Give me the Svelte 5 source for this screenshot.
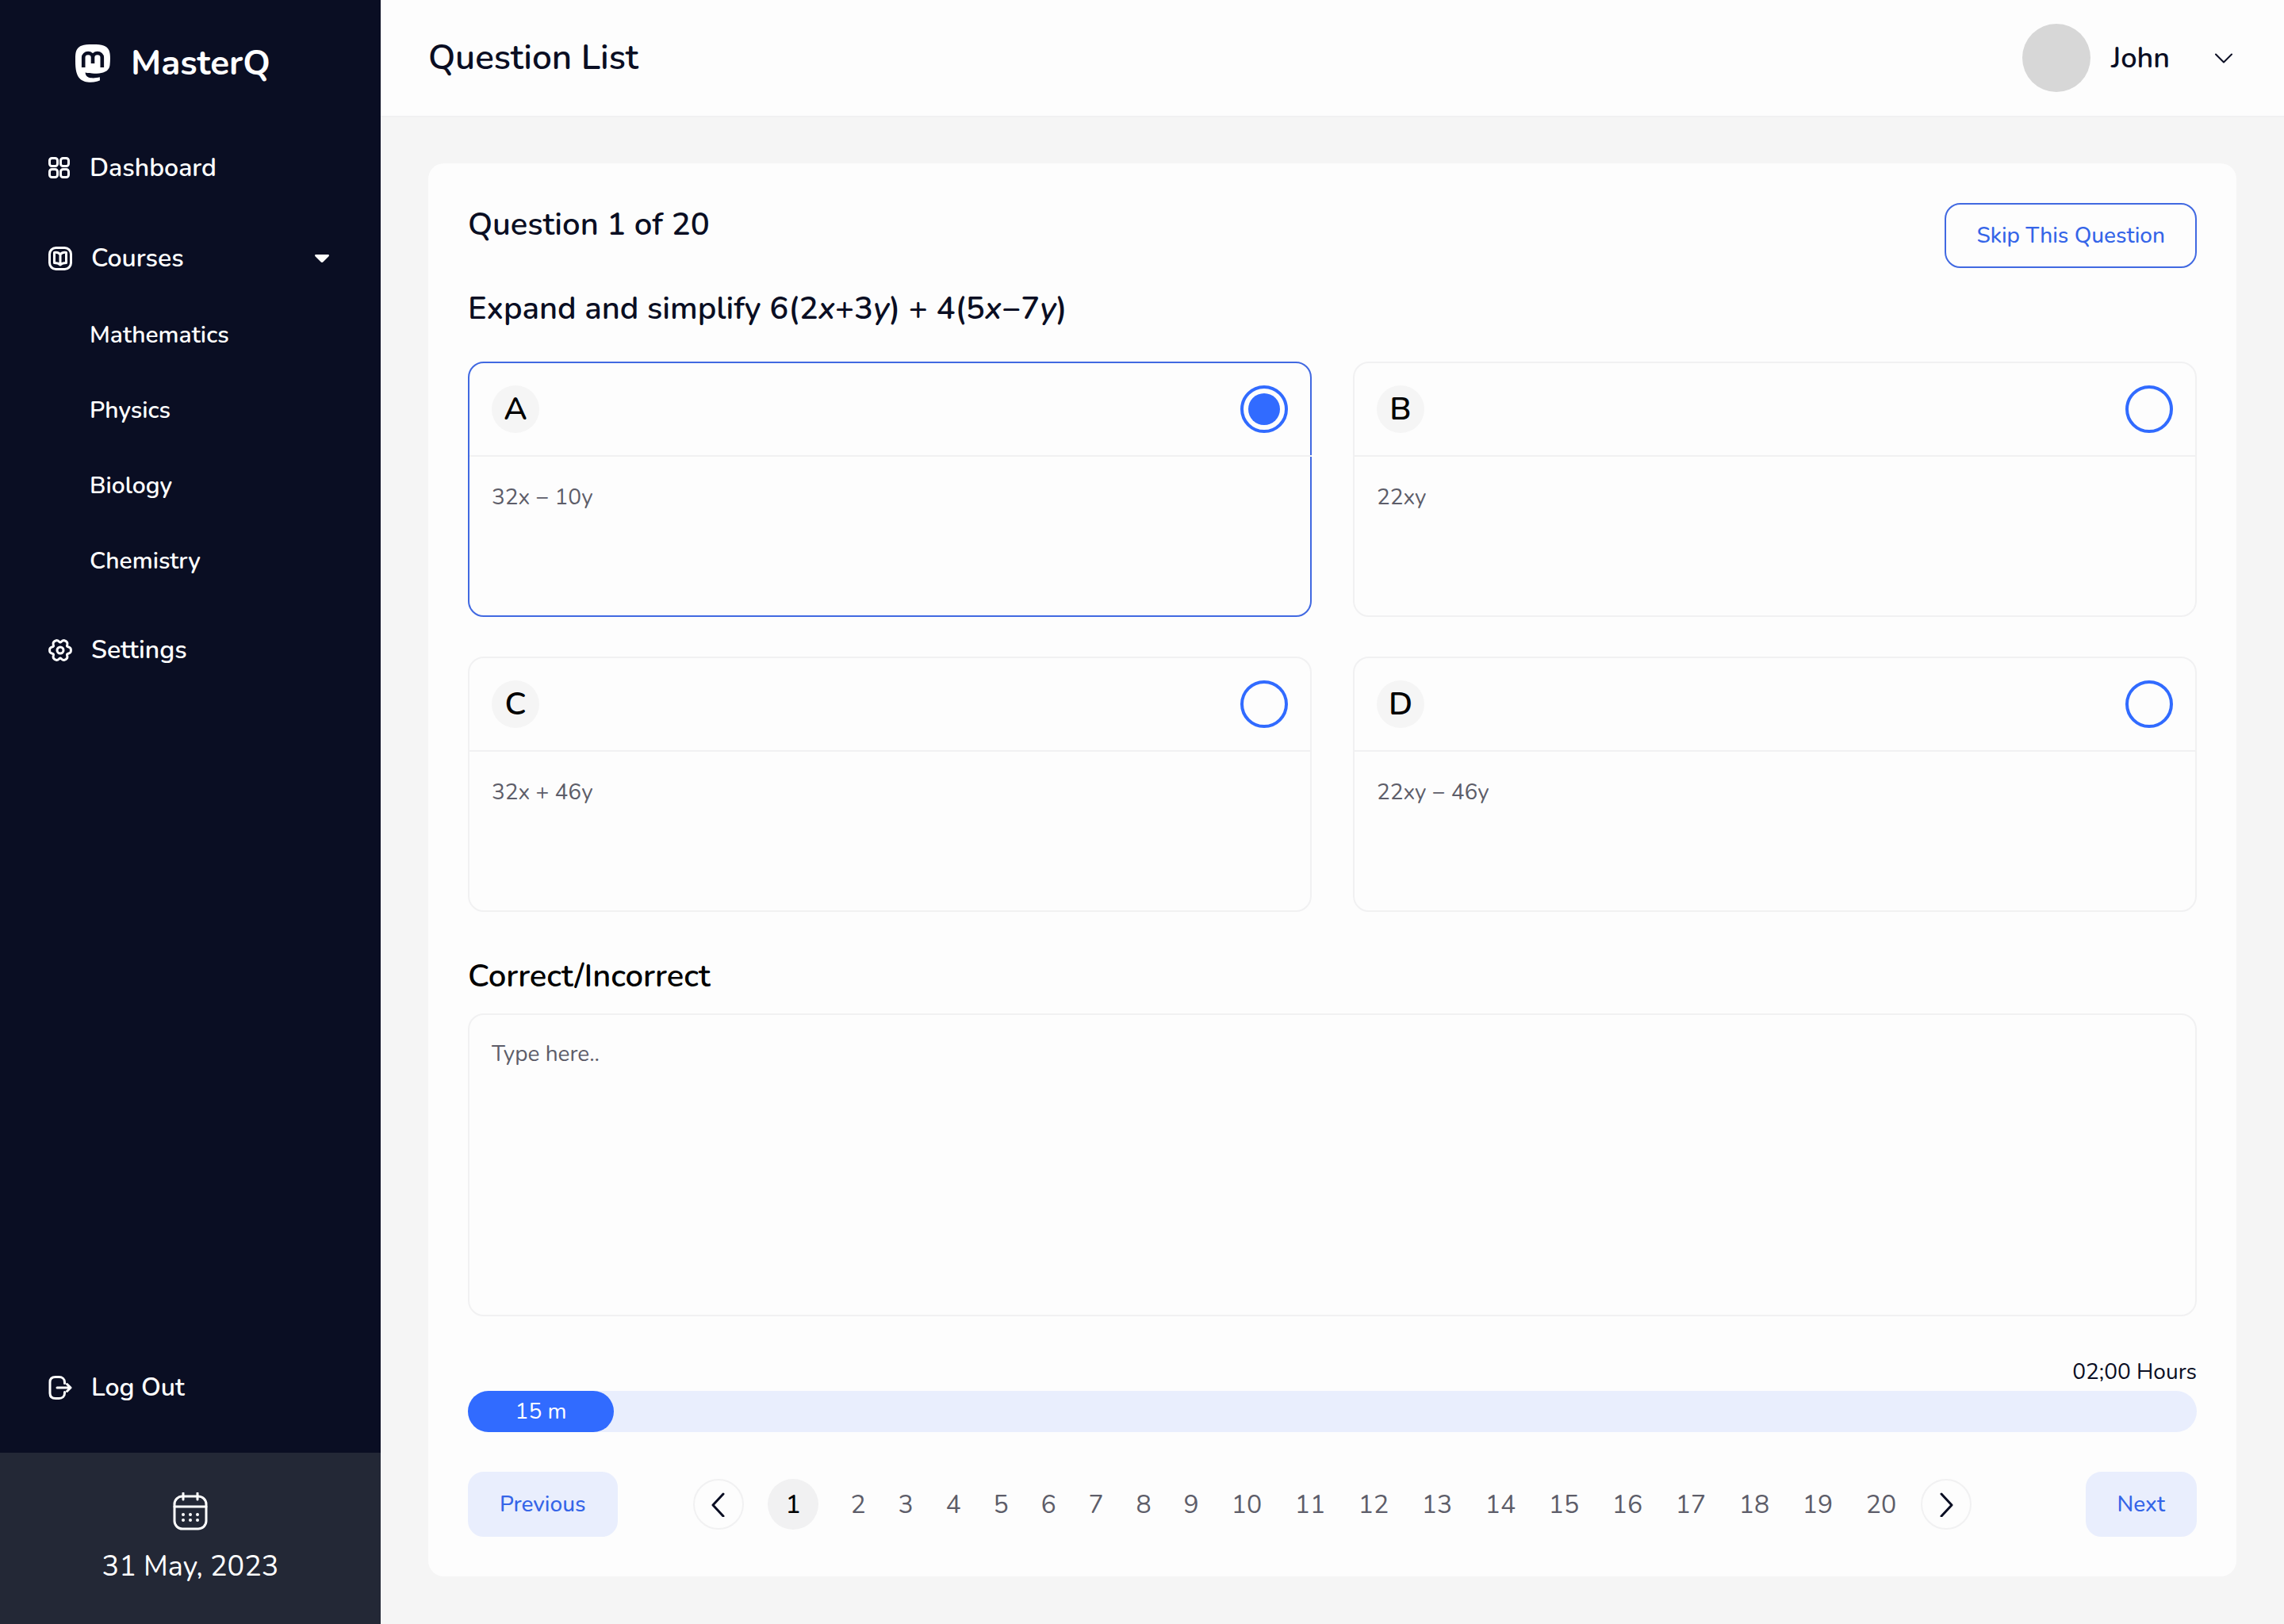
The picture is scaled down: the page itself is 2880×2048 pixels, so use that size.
<script>
  const courses = ['Mathematics', 'Physics', 'Biology', 'Chemistry'];
  const options = [
    { key: 'A', text: '32x − 10y' },
    { key: 'B', text: '22xy' },
    { key: 'C', text: '32x + 46y' },
    { key: 'D', text: '22xy − 46y' }
  ];
  const pages = Array.from({ length: 20 }, (_, i) => i + 1);
  const elapsedShare = 8.44;

  // Outline of the settings gear: six wide lobes parted by narrow notches.
  const gear = Array.from({ length: 120 }, (_, i) => {
    const a = (i / 120) * Math.PI * 2;
    const r = 13.4 - 3.4 * Math.abs(Math.sin(3 * a)) ** 4;
    return `${(15 + r * Math.cos(a)).toFixed(2)},${(15 + r * Math.sin(a)).toFixed(2)}`;
  }).join(' ');

  let selected = $state('A');
  let page = $state(1);
  let note = $state('');
</script>

<div class="app">
  <aside class="sidebar">
    <a class="brand" href="#home">
      <svg width="44" height="48" viewBox="0 0 44 48" aria-hidden="true">
        <path
          fill="#fff"
          d="M22 0C9 0 5 1.500 2 6.500C0 10 0 14 0 21C0 32 1.500 39 6 43.500C10 47.500 19 49 27 46.800C29.500 46.200 31 45.300 31 45.300L30.800 41.300C26 42.600 20 42.900 16.500 41.500C14 40.500 12.800 38.500 12.500 35.600C20 37.300 30 37 35 35.500C40 34 43 31 43.500 26C44.200 19 44.300 12 42.500 7.500C39.500 1.500 34 0 22 0Z"
        />
        <path fill="none" stroke="#0a0e23" stroke-width="4.600" d="M10.200 29V16.500a5.900 5.500 0 0 1 11.800 0V24M22 16.500a5.900 5.500 0 0 1 11.800 0V29" />
      </svg>
      <span>MasterQ</span>
    </a>

    <nav class="nav">
      <a class="item" href="#dashboard">
        <svg width="28" height="28" viewBox="0 0 28 28" aria-hidden="true">
          <rect x="1.500" y="1.500" width="10" height="10" rx="3" />
          <rect x="15.500" y="1.500" width="10" height="10" rx="3" />
          <rect x="1.500" y="15.500" width="10" height="10" rx="3" />
          <rect x="15.500" y="15.500" width="10" height="10" rx="3" />
        </svg>
        <span>Dashboard</span>
      </a>
      <button class="item" type="button" aria-expanded="true">
        <svg width="30" height="30" viewBox="0 0 30 30" aria-hidden="true">
          <rect x="1.500" y="1.500" width="27" height="27" rx="8" />
          <path d="M15 10C13 7.500 10 7 7.500 7.500V20.500C10.500 20.500 13 21 15 23C17 21 19.500 20.500 22.500 20.500V7.500C20 7 17 7.500 15 10ZM15 10V23" />
        </svg>
        <span>Courses</span>
        <svg class="caret" width="18" height="10" viewBox="0 0 18 10" aria-hidden="true">
          <path d="M1.500 0H16.500C18 0 18.400 1.200 17.500 2.200L10.500 9.200C9.600 10.200 8.400 10.200 7.500 9.200L0.500 2.200C-.4 1.200 0 0 1.500 0Z" />
        </svg>
      </button>
      <ul class="sub">
        {#each courses as course}
          <li><a href="#{course.toLowerCase()}">{course}</a></li>
        {/each}
      </ul>
      <a class="item" href="#settings">
        <svg width="30" height="30" viewBox="0 0 30 30" aria-hidden="true">
          <polygon points={gear} />
          <circle cx="15" cy="15" r="4" />
        </svg>
        <span>Settings</span>
      </a>
    </nav>

    <button class="item logout" type="button">
      <svg width="30" height="30" viewBox="0 0 30 30" aria-hidden="true">
        <path d="M20.500 9.500V8C20.500 4 17.500 1.500 13.500 1.500H9C4.500 1.500 2 4 2 8V22C2 26 4.500 28.500 9 28.500H13.500C17.500 28.500 20.500 26 20.500 22V20.500M11 15H28M23.500 10.500L28 15L23.500 19.500" />
      </svg>
      <span>Log Out</span>
    </button>

    <div class="today">
      <svg width="44" height="48" viewBox="0 0 44 48" aria-hidden="true">
        <rect x="2" y="5" width="40" height="41" rx="10" />
        <path d="M2 18H42M13 1V9M31 1V9" />
        <path class="dots" d="M13 28h.01M22 28h.01M31 28h.01M13 35h.01M22 35h.01M31 35h.01" />
      </svg>
      <time datetime="2023-05-31">31 May, 2023</time>
    </div>
  </aside>

  <div class="content">
    <header class="topbar">
      <h1>Question List</h1>
      <button class="user" type="button">
        <span class="avatar"></span>
        <span class="name">John</span>
        <svg width="32" height="32" viewBox="0 0 32 32" aria-hidden="true"><path d="M6 11.500L16 21.500L26 11.500" /></svg>
      </button>
    </header>

    <main class="panel">
      <div class="head">
        <h2>Question 1 of 20</h2>
        <button class="skip" type="button">Skip This Question</button>
      </div>
      <h2 class="prompt">Expand and simplify 6(2<i>x</i>+3<i>y</i>) + 4(5<i>x</i>−7<i>y</i>)</h2>

      <div class="options" role="radiogroup" aria-label="Answers">
        {#each options as option}
          <label class="option" class:chosen={selected === option.key}>
            <span class="option-head">
              <span class="letter">{option.key}</span>
              <input type="radio" name="answer" value={option.key} bind:group={selected} />
            </span>
            <span class="option-text">{option.text}</span>
          </label>
        {/each}
      </div>

      <label class="note-label" for="note">Correct/Incorrect</label>
      <textarea id="note" placeholder="Type here.." bind:value={note}></textarea>

      <p class="total">02;00 Hours</p>
      <div class="track">
        <div class="fill" style="width: {elapsedShare}%">15 m</div>
      </div>

      <div class="footer">
        <button class="soft" type="button">Previous</button>
        <nav class="pages" aria-label="Questions">
          <button class="arrow" type="button" aria-label="Previous page">
            <svg width="32" height="32" viewBox="0 0 32 32" aria-hidden="true"><path d="M22 3L9 17L22 31" /></svg>
          </button>
          <div class="numbers">
            {#each pages as n}
              <button
                class="page"
                class:current={page === n}
                class:wide={n > 9}
                type="button"
                onclick={() => (page = n)}>{n}</button>
            {/each}
          </div>
          <button class="arrow" type="button" aria-label="Next page">
            <svg width="32" height="32" viewBox="0 0 32 32" aria-hidden="true"><path d="M10 3L23 17L10 31" /></svg>
          </button>
        </nav>
        <button class="soft next" type="button">Next</button>
      </div>
    </main>
  </div>
</div>

<style>
  :global(body) {
    margin: 0;
    background: #f5f5f5;
  }
  .app,
  .app * {
    box-sizing: border-box;
  }
  .app {
    display: flex;
    min-height: 100vh;
    font-family: Nunito, Lato, 'Open Sans', sans-serif;
    font-size: 28px;
    color: #0a0e23;
  }
  button,
  textarea {
    font: inherit;
    color: inherit;
    border: 0;
    background: none;
    padding: 0;
    cursor: pointer;
  }
  h1,
  h2,
  p,
  ul {
    margin: 0;
    padding: 0;
    font-weight: 600;
  }
  svg {
    flex: none;
    fill: none;
    stroke: currentColor;
    stroke-width: 3;
    stroke-linecap: round;
    stroke-linejoin: round;
  }

  .sidebar {
    flex: none;
    width: 480px;
    display: flex;
    flex-direction: column;
    background: #0a0e23;
    color: #fff;
  }
  a {
    color: inherit;
    text-decoration: none;
  }
  .brand {
    display: flex;
    align-items: center;
    gap: 26px;
    padding: 50px 0 0 95px;
    font-size: 44px;
    line-height: 60px;
    font-weight: 700;
  }
  .brand svg {
    stroke: none;
    stroke-linecap: butt;
  }
  .nav {
    padding-top: 70px;
  }
  .item {
    display: flex;
    align-items: center;
    gap: 24px;
    width: 100%;
    height: 64px;
    padding: 0 65px 0 61px;
    font-size: 32px;
    line-height: 40px;
    font-weight: 600;
    text-align: left;
  }
  .nav > .item + .item {
    margin-top: 50px;
  }
  .caret {
    margin-left: auto;
    fill: currentColor;
    stroke: none;
  }
  .sub {
    list-style: none;
    padding: 17px 0 33px 113px;
    font-size: 30px;
    font-weight: 600;
  }
  .sub li {
    height: 95px;
    line-height: 95px;
  }
  .logout {
    margin-top: auto;
    margin-bottom: 50px;
  }
  .today {
    height: 216px;
    display: flex;
    flex-direction: column;
    align-items: center;
    gap: 22px;
    padding-top: 50px;
    background: #232836;
    font-size: 36px;
    line-height: 48px;
  }
  .dots {
    stroke-width: 4;
  }

  .content {
    flex: 1;
    min-width: 0;
    display: flex;
    flex-direction: column;
  }
  .topbar {
    display: flex;
    align-items: center;
    justify-content: space-between;
    height: 148px;
    padding: 0 60px;
    background: #fdfdfd;
    border-bottom: 2px solid #f1f1f2;
  }
  h1 {
    font-size: 44px;
    line-height: 60px;
  }
  .user {
    display: flex;
    align-items: center;
    font-size: 36px;
    font-weight: 600;
  }
  .avatar {
    width: 86px;
    height: 86px;
    margin-right: 26px;
    border-radius: 50%;
    background: #d7d7d7;
  }
  .user svg {
    margin-left: 52px;
    stroke-width: 2;
  }

  .panel {
    flex: 1;
    display: flex;
    flex-direction: column;
    margin: 58px 60px 60px;
    padding: 50px;
    border-radius: 20px;
    background: #fdfdfd;
  }
  .head {
    display: flex;
    justify-content: space-between;
    align-items: flex-start;
  }
  h2,
  .note-label {
    font-size: 40px;
    line-height: 54px;
    font-weight: 600;
  }
  .skip,
  .soft {
    height: 82px;
    padding: 0 38px;
    border: 2px solid #4169e1;
    border-radius: 20px;
    color: #3565e8;
    font-weight: 500;
  }
  .prompt {
    margin: 24px 0 40px;
  }
  .options {
    display: grid;
    grid-template-columns: 1fr 1fr;
    gap: 50px 52px;
  }
  .option {
    display: flex;
    flex-direction: column;
    min-height: 322px;
    border: 2px solid #f1f1f2;
    border-radius: 20px;
    cursor: pointer;
  }
  .option.chosen {
    border-color: #4169e1;
  }
  .option-head {
    display: flex;
    justify-content: space-between;
    align-items: center;
    padding: 28px;
    border-bottom: 2px solid #f1f1f2;
  }
  .chosen .option-head {
    margin-right: -2px;
    padding-right: 30px;
  }
  .letter {
    width: 60px;
    height: 60px;
    border-radius: 50%;
    background: #f5f5f5;
    color: #000;
    font-size: 40px;
    line-height: 60px;
    font-weight: 600;
    text-align: center;
  }
  input {
    appearance: none;
    width: 60px;
    height: 60px;
    margin: 0;
    border: 4px solid #316bff;
    border-radius: 50%;
    cursor: pointer;
  }
  input:checked {
    padding: 6px;
    background: #316bff content-box;
  }
  .option-text {
    padding: 32px 28px;
    line-height: 38px;
    color: #5d5d69;
  }
  .note-label {
    margin-top: 54px;
    color: #000;
  }
  textarea {
    flex: 1;
    min-height: 380px;
    margin-top: 20px;
    padding: 30px 28px;
    border: 2px solid #f1f1f2;
    border-radius: 20px;
    line-height: 38px;
    resize: none;
    cursor: text;
  }
  textarea::placeholder {
    color: #5d5d69;
    opacity: 1;
  }
  .total {
    margin-top: 52px;
    line-height: 36px;
    font-weight: 400;
    text-align: right;
  }
  .track {
    margin-top: 6px;
    border-radius: 26px;
    background: #e9eefd;
  }
  .fill {
    border-radius: 26px;
    background: #316bff;
    color: #fff;
    line-height: 52px;
    text-align: center;
  }
  .footer {
    display: grid;
    grid-template-columns: 1fr auto 1fr;
    align-items: center;
    margin-top: 50px;
  }
  .soft {
    justify-self: start;
    border-color: #e9eefd;
    background: #e9eefd;
  }
  .next {
    justify-self: end;
  }
  .pages,
  .numbers {
    display: flex;
    align-items: center;
  }
  .pages {
    gap: 30px;
  }
  .numbers {
    gap: 40px;
  }
  .arrow {
    display: flex;
    align-items: center;
    justify-content: center;
    width: 64px;
    height: 64px;
    border: 2px solid #f1f1f2;
    border-radius: 50%;
    color: #0a0e23;
  }
  .page {
    width: 20px;
    height: 64px;
    font-size: 32px;
    color: #5d5d69;
  }
  .page.wide {
    width: 40px;
  }
  .page.current {
    width: 64px;
    border-radius: 50%;
    background: #f1f1f2;
    color: #000;
    font-weight: 500;
  }
</style>
